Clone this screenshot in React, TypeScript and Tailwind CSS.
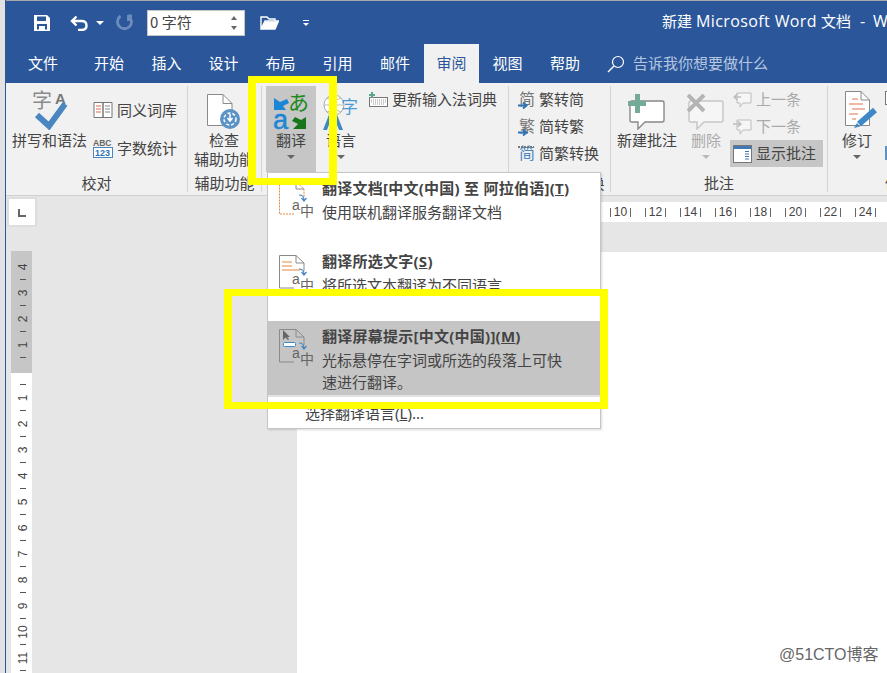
import type { ReactNode } from "react";

const tabs = [
  { label: "文件", width: "w-[74px]" },
  { label: "开始", width: "w-[58px]" },
  { label: "插入", width: "w-[57px]" },
  { label: "设计", width: "w-[57px]" },
  { label: "布局", width: "w-[57px]" },
  { label: "引用", width: "w-[57px]" },
  { label: "邮件", width: "w-[58px]" },
  { label: "审阅", width: "w-[55px]", active: true },
  { label: "视图", width: "w-[57px]" },
  { label: "帮助", width: "w-[58px]" },
];

const cjk = "'Noto Sans CJK SC', sans-serif";

function Caret({ className = "" }: { className?: string }) {
  return <span className={`block h-0 w-0 shrink-0 border-x-[4px] border-t-[4px] border-x-transparent ${className}`} />;
}

function Group({ width, label, children }: { width: string; label: string; children: ReactNode }) {
  return (
    <div className={`${width} flex h-[106px] shrink-0 flex-col border-r border-[#d4d4d4]`}>
      <div className="flex h-[86px]">{children}</div>
      <div className="h-[20px] whitespace-nowrap pt-[3px] text-center leading-[17px] text-[#444]">{label}</div>
    </div>
  );
}

function BigButton({
  width,
  icon,
  lines,
  caret,
  active,
  disabled,
}: {
  width: string;
  icon: ReactNode;
  lines: string[];
  caret?: boolean;
  active?: boolean;
  disabled?: boolean;
}) {
  return (
    <div className={`${width} flex h-[86px] shrink-0 flex-col items-center ${active ? "bg-[#c6c6c6]" : ""}`}>
      <div className="flex h-[44px] items-end justify-center">{icon}</div>
      {lines.map((line) => (
        <div key={line} className={`h-[19px] whitespace-nowrap pt-[1px] leading-[19px] ${disabled ? "text-[#aaa]" : "text-[#444]"}`}>
          {line}
        </div>
      ))}
      {caret && <Caret className={`mt-[6px] ${disabled ? "border-t-[#bbb]" : "border-t-[#666]"}`} />}
    </div>
  );
}

function SmallRow({
  icon,
  label,
  height = "h-[27px]",
  disabled,
  active,
}: {
  icon: ReactNode;
  label: string;
  height?: string;
  disabled?: boolean;
  active?: boolean;
}) {
  return (
    <div
      className={`flex ${height} items-center gap-[4px] whitespace-nowrap ${active ? "bg-[#c6c6c6]" : ""} ${
        disabled ? "text-[#aaa]" : "text-[#444]"
      }`}
    >
      {icon}
      <span>{label}</span>
    </div>
  );
}

function SpellIcon() {
  return (
    <svg width="36" height="40" viewBox="0 0 36 40">
      <text x="0" y="18" fontSize="20" fill="#8a8a8a" fontFamily={cjk}>字</text>
      <text x="23" y="14" fontSize="15" fontWeight="700" fill="#777" fontFamily="'Liberation Sans', sans-serif">A</text>
      <path d="M5 25L17 36L33 14" fill="none" stroke="#4a86c0" strokeWidth="6" />
    </svg>
  );
}

function BookIcon() {
  return (
    <svg width="20" height="18" viewBox="0 0 19 18">
      <path d="M.5 1.5H9.5V16.5H.5ZM9.5 1.5H18.5V16.5H9.5Z" fill="#fff" stroke="#777" />
      <path d="M2.5 5H7.5M2.5 8H7.5M2.5 11H7.5" stroke="#d9694a" />
      <path d="M11.5 5H16.5M11.5 8H16.5M11.5 11H16.5" stroke="#888" />
    </svg>
  );
}

function CountIcon() {
  return (
    <svg width="20" height="20" viewBox="0 0 20 20">
      <text x="0" y="8" fontSize="8.5" fontWeight="700" fill="#666" fontFamily="'Liberation Sans', sans-serif">ABC</text>
      <rect x=".5" y="9.5" width="19" height="10" fill="#fff" stroke="#4a86c0" />
      <text x="2" y="18" fontSize="9" fontWeight="700" fill="#2f75b5" fontFamily="'Liberation Sans', sans-serif">123</text>
    </svg>
  );
}

function AccessIcon() {
  return (
    <svg width="34" height="36" viewBox="0 0 34 36">
      <path d="M.5.5H16L25 9.5V31.5H.5Z" fill="#fff" stroke="#8a8a8a" />
      <path d="M16 .5V9.5H25" fill="none" stroke="#8a8a8a" />
      <circle cx="23" cy="25" r="10" fill="#5b93c7" />
      <circle cx="23" cy="25" r="6" fill="none" stroke="#fff" strokeWidth="1.5" strokeDasharray="3 2" />
      <path d="M23 20V26M20.5 24L23 27L25.5 24" fill="none" stroke="#fff" strokeWidth="1.5" />
    </svg>
  );
}

function TranslateIcon() {
  return (
    <svg width="36" height="38" viewBox="0 0 36 38">
      <path d="M1 6L7 10L14 7L16 11L10 14L13 18H1Z" fill="#1c86d6" />
      <text x="15" y="18" fontSize="21" fill="#1f8a1f" fontFamily={cjk}>あ</text>
      <text x="0" y="37" fontSize="27" fill="#1c86d6" stroke="#1c86d6" strokeWidth=".5" fontFamily="'Liberation Sans', sans-serif">a</text>
      <path d="M33 37V25L28 28L22 25L19 29L25 32L20 37Z" fill="#17761a" />
    </svg>
  );
}

function LanguageIcon() {
  return (
    <svg width="38" height="36" viewBox="0 0 38 36">
      <circle cx="12" cy="11" r="10" fill="#fff" stroke="#aaa" />
      <path d="M2 11H22M12 1V21M5 4Q12 8 19 4M5 18Q12 14 19 18" fill="none" stroke="#bbb" />
      <text x="19" y="19" fontSize="17" fill="#4a9bd4" fontFamily={cjk}>字</text>
      <path d="M1 36L10 13H12L21 36H17L11 20L5 36Z" fill="#3f88c8" />
    </svg>
  );
}

function KeyboardIcon() {
  return (
    <svg width="19" height="15" viewBox="0 0 19 15">
      <rect x=".5" y="5.5" width="18" height="9" fill="#fff" stroke="#777" />
      <path d="M2 8H17M2 10H17M4 12H15" stroke="#999" strokeDasharray="1 1" />
      <path d="M2 0H4V2H6V4H4V6H2V4H0V2H2Z" fill="#5aa58a" />
    </svg>
  );
}

function ConvertIcon({ glyph, arrow }: { glyph: string; arrow: boolean }) {
  return (
    <svg width="17" height="20" viewBox="0 0 17 20">
      <text x="1" y="15" fontSize="16" fill={arrow ? "#777" : "#4a86c0"} fontFamily={cjk}>{glyph}</text>
      {arrow ? (
        <path d="M-1 15.5H8M5 12.5L8.5 15.5L5 18.5" fill="none" stroke="#2f75b5" strokeWidth="2" />
      ) : (
        <path d="M0 3H16" stroke="#777" strokeWidth="2" strokeDasharray="2 1" />
      )}
    </svg>
  );
}

function CommentBubble({ stroke, fill }: { stroke: string; fill: string }) {
  return <path d="M4 7H34Q36 7 36 9V26Q36 28 34 28H17L10 35V28H4Q2 28 2 26V9Q2 7 4 7Z" fill={fill} stroke={stroke} strokeWidth="1.4" />;
}

function NewCommentIcon() {
  return (
    <svg width="38" height="36" viewBox="0 0 38 36">
      <CommentBubble stroke="#888" fill="#fff" />
      <path d="M7 0H12V7H18V12H12V19H7V12H0V7H7Z" fill="#74ab98" />
    </svg>
  );
}

function DeleteCommentIcon() {
  return (
    <svg width="38" height="36" viewBox="0 0 38 36">
      <CommentBubble stroke="#c6c6c6" fill="#f6f6f6" />
      <path d="M1 1L17 17M17 1L1 17" stroke="#b4b4b4" strokeWidth="4" />
    </svg>
  );
}

function StepIcon({ next }: { next?: boolean }) {
  return (
    <svg width="19" height="16" viewBox="0 0 19 16">
      <path d="M4 1H18V11H10L7 15V11H4Z" fill="#f6f6f6" stroke="#bdbdbd" />
      <path d={next ? "M0 5H7M4.5 2L8 5L4.5 8" : "M8 5H1M4.5 2L1 5L4.5 8"} fill="none" stroke="#bdbdbd" strokeWidth="1.4" />
    </svg>
  );
}

function ShowCommentsIcon() {
  return (
    <svg width="19" height="18" viewBox="0 0 19 18">
      <rect x=".5" y=".5" width="18" height="17" fill="#fff" stroke="#777" />
      <rect x="1" y="1" width="17" height="3" fill="#3f78b5" />
      <path d="M12 6.5H16M12 9H16M12 11.5H16M12 14H16" stroke="#3f78b5" />
    </svg>
  );
}

function TrackIcon() {
  return (
    <svg className="mb-[2px] ml-[10px]" width="34" height="37" viewBox="0 0 34 37">
      <path d="M.5.5H16L24.5 9V34.5H.5Z" fill="#fff" stroke="#888" />
      <path d="M16 .5V9H24.5" fill="none" stroke="#888" />
      <path d="M7 8H13M4 13H18M7 18H20M4 23H13M7 28H11" stroke="#e0724a" />
      <path d="M30 19L14 33" stroke="#3f88c8" strokeWidth="6" />
      <path d="M12 32L15 35.5L9 37Z" fill="#3f88c8" />
    </svg>
  );
}

function MenuIcon({ variant }: { variant: "doc" | "text" | "tip" }) {
  return (
    <svg width="36" height="38" viewBox="0 0 36 38">
      <path
        d="M1.5 .5H18L26 8V16M1.5 .5V33H16"
        fill="none"
        stroke={variant === "doc" ? "#e58a3c" : "#8a8a8a"}
        strokeDasharray={variant === "doc" ? "2 1" : undefined}
      />
      <path d="M18 .5V8H26" fill="none" stroke="#8a8a8a" />
      {variant === "text" && <path d="M4 7H14M4 11H14M4 15H22" stroke="#e58a3c" />}
      {variant === "tip" && (
        <>
          <path d="M5 1V11L7.5 8.5L10 11L11 10L9 8H12Z" fill="#666" />
          <rect x="5.5" y="13.5" width="12" height="4" rx="1" fill="#fff" stroke="#3f88c8" />
        </>
      )}
      <path d="M21 14Q26 14 26 19M23.5 17L26 20L28.5 17" fill="none" stroke="#4a86c0" strokeWidth="1.2" />
      <text x="14" y="29" fontSize="14" fill="#666" fontFamily="'Liberation Sans', sans-serif">a</text>
      <text x="22" y="35" fontSize="14" fill="#666" fontFamily={cjk}>中</text>
    </svg>
  );
}

function MenuItem({
  variant,
  title,
  mnemonic,
  lines,
  hover,
  top,
}: {
  variant: "doc" | "text" | "tip";
  title: string;
  mnemonic: string;
  lines: string[];
  hover?: boolean;
  top: string;
}) {
  return (
    <div className={`flex h-[74px] ${hover ? "bg-[#c5c5c5]" : ""}`}>
      <div className="w-[54px] pl-[10px] pt-[8px]">
        <MenuIcon variant={variant} />
      </div>
      <div className={`${top} leading-[22px] text-[#444]`}>
        <div className="font-bold tracking-[0.25px]">
          {title}(<u>{mnemonic}</u>)
        </div>
        <div className="mt-[2px]">
          {lines.map((line) => (
            <div key={line}>{line}</div>
          ))}
        </div>
      </div>
    </div>
  );
}

function TranslateMenu() {
  return (
    <div className="absolute left-[267px] top-[172px] h-[257px] w-[334px] border border-[#c6c6c6] bg-white text-[15px] shadow-[1px_1px_2px_rgba(0,0,0,0.15)]">
      <MenuItem variant="doc" top="pt-[4px]" title="翻译文档[中文(中国) 至 阿拉伯语]" mnemonic="T" lines={["使用联机翻译服务翻译文档"]} />
      <MenuItem variant="text" top="pt-[3px]" title="翻译所选文字" mnemonic="S" lines={["将所选文本翻译为不同语言"]} />
      <MenuItem
        variant="tip"
        top="pt-[4px]"
        hover
        title="翻译屏幕提示[中文(中国)]"
        mnemonic="M"
        lines={["光标悬停在字词或所选的段落上可快", "速进行翻译。"]}
      />
      <div className="h-[2px] bg-[#e2e2e2]" />
      <div className="flex h-[32px] items-center pl-[37px] text-[#444]">
        <span>
          选择翻译语言(<u>L</u>)...
        </span>
      </div>
    </div>
  );
}

function VerticalRuler() {
  const upper = [4, 3, 2, 1];
  const lower = [1, 2, 3, 4, 5, 6, 7, 8, 9, 10, 11, 12];
  const Number = ({ n }: { n: number }) => (
    <div className="flex h-[13px] items-center justify-center pl-[3px]">
      <span className="-rotate-90 whitespace-nowrap text-[12px] leading-[12px]">{n}</span>
    </div>
  );
  const Tick = () => (
    <div className="flex h-[13px] items-center justify-center pl-[3px]">
      <span className="block h-px w-[6px] bg-[#555]" />
    </div>
  );
  return (
    <div className="ml-[5px] mt-[26px] w-[21px] text-[#444] [font-family:'Liberation_Sans',sans-serif]">
      <div className="h-[122px] overflow-hidden bg-[#c6c6c6] pt-[9px]">
        {upper.map((n) => (
          <div key={n}>
            <Number n={n} />
            <Tick />
          </div>
        ))}
      </div>
      <div className="bg-white pt-[5px]">
        {lower.map((n) => (
          <div key={n}>
            <Tick />
            <Number n={n} />
          </div>
        ))}
      </div>
    </div>
  );
}

export default function App() {
  const rulerLabels = [10, 12, 14, 16, 18, 20, 22, 24];
  return (
    <div className="relative flex h-[673px] w-[887px] overflow-hidden bg-[#e6e6e6] text-[15px] [font-family:'Noto_Sans','Noto_Sans_CJK_SC',sans-serif]">
      <div className="w-[5px] shrink-0 bg-[#e2e2e2]" />
      <div className="flex min-w-0 flex-1 flex-col border-l border-[#2b579a]">
        <div className="h-px bg-[#a9a9a9]" />
        <div className="flex h-[43px] items-center overflow-hidden bg-[#2b579a] text-white">
          <svg className="ml-[28px] shrink-0" width="16" height="16" viewBox="0 0 16 16">
            <path fillRule="evenodd" d="M0 0H13L16 3V16H0ZM3 1.5V6H12V1.5ZM3 9V14.5H5V11H11V14.5H13V9Z" fill="#fff" />
          </svg>
          <svg className="ml-[20px] shrink-0" width="18" height="16" viewBox="0 0 18 16">
            <path d="M6.5 1.5L2 6L6.5 10.5M2 6H11.5Q16.5 6 16.5 10.5T11.5 15H8" fill="none" stroke="#fff" strokeWidth="2.4" />
          </svg>
          <Caret className="ml-[8px] border-t-white" />
          <svg className="ml-[12px] shrink-0" width="17" height="17" viewBox="0 0 17 17">
            <path d="M4.5 2A7 7 0 1 0 12.5 2M12.5 1V7M12.5 2H16" fill="none" stroke="#6c8dbd" strokeWidth="2.8" />
          </svg>
          <div className="ml-[14px] flex h-[26px] w-[98px] shrink-0 items-center border border-[#c6c6c6] bg-white pl-[2px] text-[#444]">
            <span className="flex-1 [font-family:'Noto_Sans_CJK_SC',sans-serif]">0 字符</span>
            <div className="mr-[7px] flex flex-col gap-[6px]">
              <span className="block h-0 w-0 border-x-[3px] border-b-[4px] border-x-transparent border-b-[#666]" />
              <span className="block h-0 w-0 border-x-[3px] border-t-[4px] border-x-transparent border-t-[#666]" />
            </div>
          </div>
          <svg className="ml-[15px] shrink-0" width="19" height="15" viewBox="0 0 19 15">
            <path d="M1 14V2H7L9 4H15V6H5L1 14H15L18.5 6H15" fill="#2b579a" stroke="#fff" strokeWidth="1.4" />
            <path d="M1.5 14L5 6.5H18L15 14Z" fill="#fff" />
          </svg>
          <div className="ml-[24px] flex shrink-0 flex-col items-center gap-[2px]">
            <span className="block h-px w-[6px] bg-white" />
            <span className="block h-0 w-0 border-x-[3px] border-t-[3px] border-x-transparent border-t-white" />
          </div>
          <span className="mb-[4px] ml-[353px] shrink-0 whitespace-nowrap [font-family:'Open_Sans','Noto_Sans_CJK_SC',sans-serif]">
            新建 <span className="text-[16px] tracking-[0.4px]">Microsoft Word</span> 文档
            <span className="ml-[9px] text-[16px]">-</span>
            <span className="ml-[8px] text-[16px]">Word</span>
          </span>
        </div>

        <div className="flex h-[39px] items-center bg-[#2b579a] text-white">
          {tabs.map((tab) => (
            <div
              key={tab.label}
              className={`${tab.width} flex h-full shrink-0 items-center justify-center ${
                tab.active ? "bg-[#f1f1f1] text-[#2b579a]" : ""
              }`}
            >
              {tab.label}
            </div>
          ))}
          <svg className="ml-[13px]" width="18" height="18" viewBox="0 0 18 18">
            <circle cx="11" cy="7" r="5.5" fill="none" stroke="#fff" strokeWidth="1.2" />
            <path d="M7 11L1 17" stroke="#fff" strokeWidth="1.4" />
          </svg>
          <span className="ml-[8px] text-[#b5c6e0]">告诉我你想要做什么</span>
        </div>

        <div className="flex h-[113px] shrink-0 overflow-hidden border-b border-[#d0d0d0] bg-[#f1f1f1] pt-[3px]">
          <Group width="w-[182px]" label="校对">
            <div className="ml-[6px] w-[75px]">
              <BigButton width="w-[75px]" icon={<SpellIcon />} lines={["拼写和语法"]} />
            </div>
            <div className="ml-[6px] pt-[5px]">
              <SmallRow height="h-[38px]" icon={<BookIcon />} label="同义词库" />
              <SmallRow height="h-[38px]" icon={<CountIcon />} label="字数统计" />
            </div>
          </Group>
          <Group width="w-[74px]" label="辅助功能">
            <BigButton width="w-[72px]" icon={<AccessIcon />} lines={["检查", "辅助功能"]} />
          </Group>
          <Group width="w-[247px]" label="语言">
            <div className="w-[4px]" />
            <BigButton width="w-[50px]" active icon={<TranslateIcon />} lines={["翻译"]} caret />
            <BigButton width="w-[50px]" icon={<LanguageIcon />} lines={["语言"]} caret />
            <div className="ml-[3px]">
              <SmallRow icon={<KeyboardIcon />} label="更新输入法词典" />
            </div>
          </Group>
          <Group width="w-[102px]" label="中文简繁转换">
            <div className="ml-[9px]">
              <SmallRow icon={<ConvertIcon glyph="简" arrow />} label="繁转简" />
              <SmallRow icon={<ConvertIcon glyph="繁" arrow />} label="简转繁" />
              <SmallRow icon={<ConvertIcon glyph="简" arrow={false} />} label="简繁转换" />
            </div>
          </Group>
          <Group width="w-[217px]" label="批注">
            <div className="w-[3px]" />
            <BigButton width="w-[66px]" icon={<NewCommentIcon />} lines={["新建批注"]} />
            <div className="w-[2px]" />
            <BigButton width="w-[48px]" disabled icon={<DeleteCommentIcon />} lines={["删除"]} caret />
            <div className="w-[93px]">
              <SmallRow disabled icon={<span className="ml-[3px] flex"><StepIcon /></span>} label="上一条" />
              <SmallRow disabled icon={<span className="ml-[3px] flex"><StepIcon next /></span>} label="下一条" />
              <SmallRow active icon={<span className="ml-[3px] flex"><ShowCommentsIcon /></span>} label="显示批注" />
            </div>
          </Group>
          <div className="flex h-[106px] shrink-0 flex-col">
            <div className="ml-[4px] flex h-[86px]">
              <BigButton width="w-[50px]" icon={<TrackIcon />} lines={["修订"]} caret />
              <div className="ml-[3px] w-[6px]">
                <div className="mt-[5px] h-[14px] border border-[#777] bg-white" />
                <div className="mt-[41px] h-[14px] bg-[#5b93c7]" />
              </div>
            </div>
            <div className="ml-[57px] h-[20px] pt-[3px] leading-[17px] text-[#444]">修订</div>
          </div>
        </div>

        <div className="flex min-h-0 flex-1">
          <div className="w-[291px] shrink-0">
            <div className="ml-[3px] mt-[3px] flex h-[26px] w-[26px] items-center justify-center bg-white outline outline-2 outline-[#dedede]">
              <span className="mt-[2px] block h-[8px] w-[8px] border-b-2 border-l-2 border-[#666]" />
            </div>
            <VerticalRuler />
          </div>
          <div className="flex min-w-0 flex-1 flex-col">
            <div className="mt-[6px] flex h-[20px] items-center bg-white pl-[306px] text-[12px] text-[#444] [font-family:'Liberation_Sans',sans-serif]">
              {rulerLabels.map((n) => (
                <span key={n} className="flex w-[35px] shrink-0 items-center justify-center gap-[3px]">
                  <span className="h-[9px] w-px bg-[#666]" />
                  {n}
                  <span className="h-[9px] w-px bg-[#666]" />
                </span>
              ))}
            </div>
            <div className="mt-[30px] flex-1 bg-white" />
          </div>
        </div>
      </div>

      <TranslateMenu />

      <div className="absolute left-[248px] top-[76px] h-[109px] w-[89px] border-y-[7px] border-x-[8px] border-[#ffff00]" />
      <div className="absolute left-[224px] top-[289px] h-[120px] w-[384px] border-y-[7px] border-x-[8px] border-[#ffff00]" />

      <span className="absolute left-[779px] top-[644px] text-[16px] leading-[22px] text-[#666] [font-family:'Liberation_Sans','Noto_Sans_CJK_SC',sans-serif] [text-shadow:0_0_2px_#fff]">
        @51CTO博客
      </span>
    </div>
  );
}
